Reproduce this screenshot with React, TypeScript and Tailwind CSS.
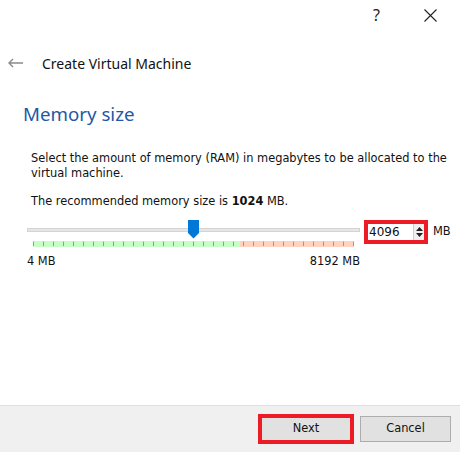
import React from "react";

const ticks = Array.from({ length: 33 }, (_, i) => i);

export default function App() {
  return (
    <div className="w-[460px] h-[452px] bg-white flex flex-col overflow-hidden" style={{ fontFamily: '"DejaVu Sans", sans-serif' }}>
      <div className="h-[30px] flex justify-end items-center">
        <span className="text-[16px] text-[#222] mr-[44px]" style={{ fontFamily: '"Noto Sans", sans-serif' }}>?</span>
        <svg width="13" height="13" viewBox="0 0 13 13" className="mr-[23px]">
          <path d="M0.5 0.5 L12.5 12.5 M12.5 0.5 L0.5 12.5" stroke="#222" strokeWidth="1.1" fill="none" />
        </svg>
      </div>
      <div className="mt-[18px] h-[30px] flex items-center">
        <svg width="16" height="10" viewBox="0 0 16 10" className="ml-[8px]">
          <path d="M1 5 H15 M5 1 L1 5 L5 9" stroke="#8a8a8a" strokeWidth="1.4" fill="none" />
        </svg>
        <span className="ml-[18px] text-[14px] text-[#111]" style={{ fontFamily: '"Noto Sans", sans-serif' }}>Create Virtual Machine</span>
      </div>
      <div className="mt-[23px] ml-[23px] text-[18.7px] leading-[26px] text-[#2457a6]" style={{ fontFamily: '"Noto Sans", sans-serif' }}>Memory size</div>
      <div className="mt-[24px] ml-[31px] mr-[8px] text-[11.4px] leading-[15px] text-[#111]">
        Select the amount of memory (RAM) in megabytes to be allocated to the virtual machine.
      </div>
      <div className="mt-[13px] ml-[31px] text-[11.4px] leading-[15px] text-[#111]">
        The recommended memory size is <b>1024</b> MB.
      </div>
      <div className="mt-[11px] ml-[27px] flex">
        <div className="w-[333px] flex flex-col">
          <div className="relative h-[26px]">
            <div className="absolute left-0 right-0 top-[8px] h-[4px] bg-[#e7e7e7] border border-[#d4d4d4]" />
            <svg width="11" height="19" viewBox="0 0 11 19" className="absolute left-[161px] top-0">
              <path d="M0 0 H11 V13 L5.5 18.5 L0 13 Z" fill="#0078d7" />
            </svg>
            <div className="absolute left-[6px] top-[21px] w-[321px] h-[6px] flex">
              <div className="w-[207px] bg-[#c6ffc6]" />
              <div className="flex-1 bg-[#ffd2c2]" />
            </div>
            <svg width="322" height="6" viewBox="0 0 322 6" className="absolute left-[6px] top-[21px]">
              {ticks.map((i) => (
                <line key={i} x1={i * 10 + 0.5} y1={0.5} x2={i * 10 + 0.5} y2={5} stroke="#9a9a9a" strokeWidth="1" />
              ))}
            </svg>
          </div>
          <div className="mt-[8px] flex justify-between text-[11.4px] leading-[15px] text-[#111]">
            <span>4 MB</span>
            <span>8192 MB</span>
          </div>
        </div>
        <div className="ml-[4px] h-[24px] w-[64px] border-[4px] border-[#ed1c24] flex bg-white">
          <div className="flex-1 flex items-center pl-[1px] text-[12px] text-[#111]">4096</div>
          <div className="w-[11px] flex flex-col items-center justify-center gap-[2px] bg-[#f0f0f0] border-l border-[#ccc]">
            <svg width="7" height="4" viewBox="0 0 7 4"><path d="M0 4 L3.5 0 L7 4 Z" fill="#222" /></svg>
            <svg width="7" height="4" viewBox="0 0 7 4"><path d="M0 0 L3.5 4 L7 0 Z" fill="#222" /></svg>
          </div>
        </div>
        <div className="ml-[5px] mt-[4px] text-[11.4px] leading-[15px] text-[#111]">MB</div>
      </div>
      <div className="mt-auto h-[47px] bg-[#f0f0f0] border-t border-[#dfdfdf] flex items-start justify-end pt-[8px] pr-[9px]">
        <div className="w-[96px] h-[30px] border-[4px] border-[#ed1c24] bg-[#e1e1e1] flex items-center justify-center text-[11.4px] text-[#111]">Next</div>
        <div className="ml-[6px] mt-[2px] w-[91px] h-[26px] border border-[#adadad] bg-[#e1e1e1] flex items-center justify-center text-[11.4px] text-[#111]">Cancel</div>
      </div>
    </div>
  );
}
